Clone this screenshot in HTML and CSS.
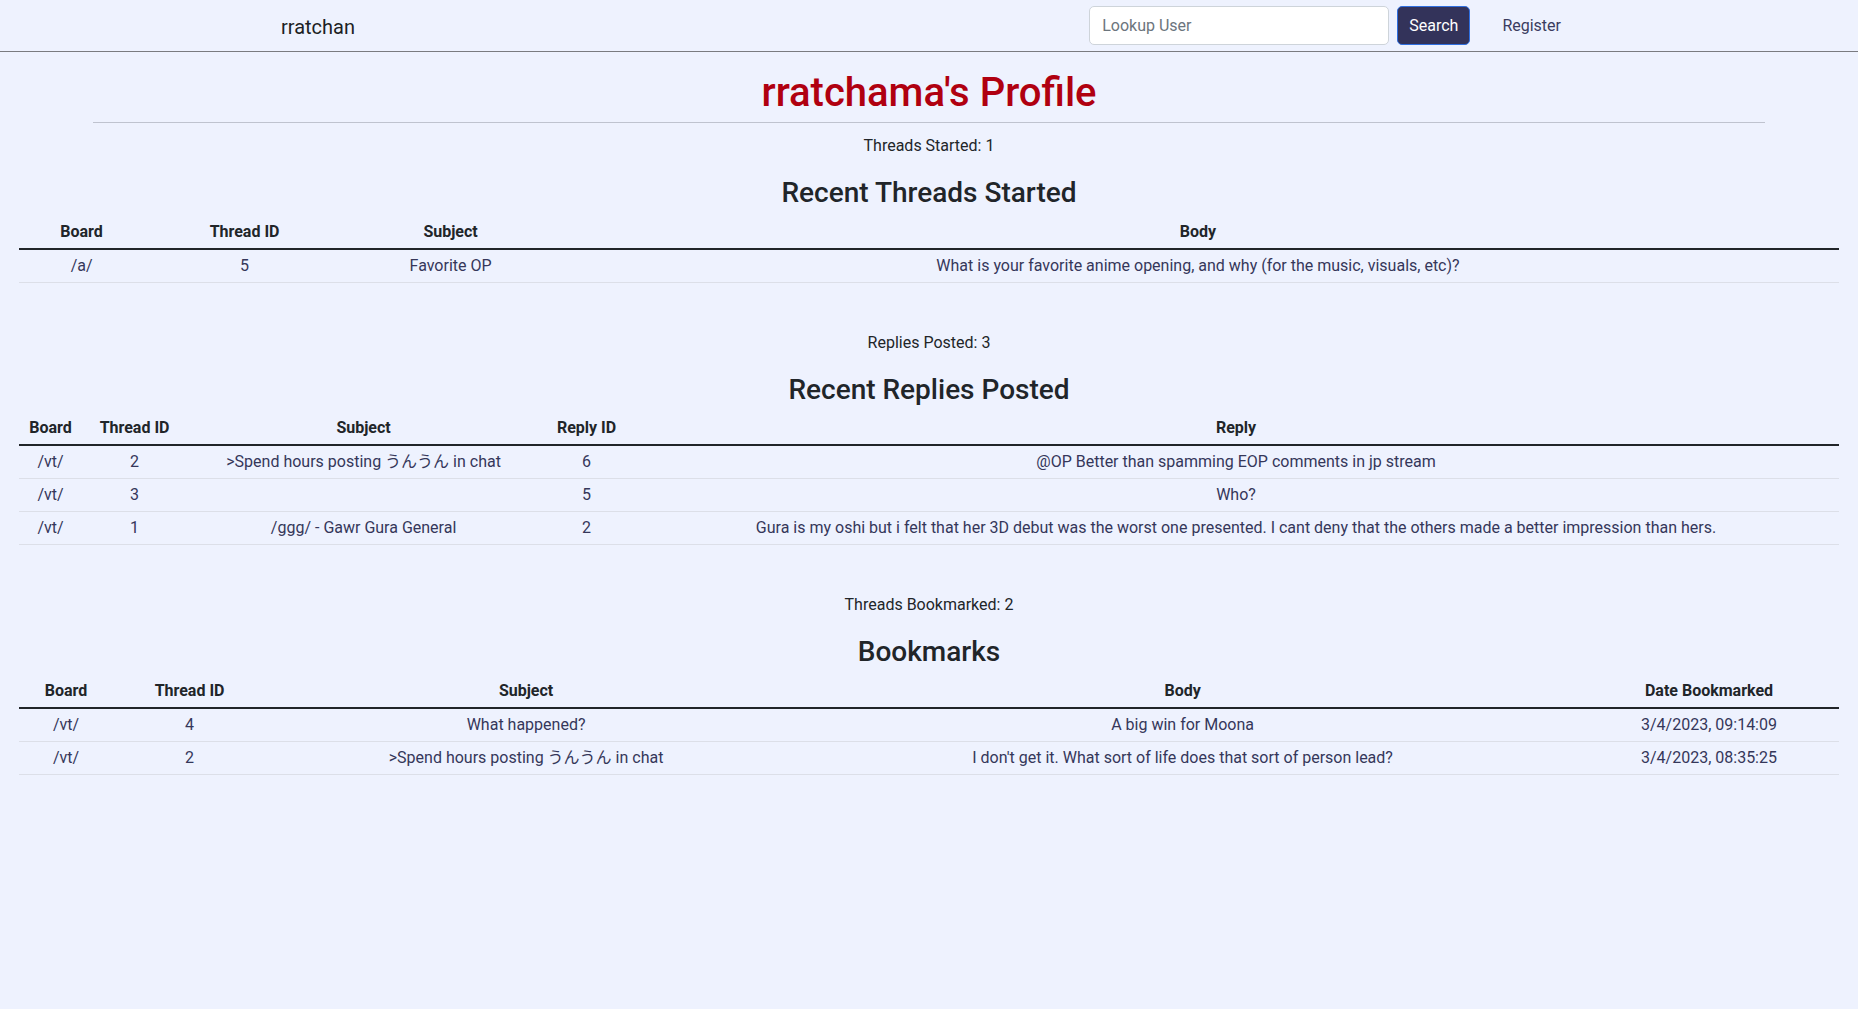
FILE: index.html
```html
<!DOCTYPE html>
<html lang="en">
<head>
<meta charset="utf-8">
<title>rratchama's Profile - rratchan</title>
<link rel="stylesheet" href="styles.css">
</head>
<body>
<nav class="navbar">
  <div class="nav-inner">
    <a class="brand" href="#">rratchan</a>
    <div class="nav-right">
      <form class="search">
        <input class="search-input" type="text" placeholder="Lookup User">
        <button class="search-btn" type="button">Search</button>
      </form>
      <a class="nav-link" href="#">Register</a>
    </div>
  </div>
</nav>

<main class="profile">
  <h1 class="profile-title">rratchama's Profile</h1>
  <hr class="divider">

  <section class="block">
    <p class="count">Threads Started: 1</p>
    <h3 class="block-title">Recent Threads Started</h3>
    <table class="data">
      <thead>
        <tr>
          <th class="c126">Board</th>
          <th class="c200">Thread ID</th>
          <th class="c212">Subject</th>
          <th>Body</th>
        </tr>
      </thead>
      <tbody>
        <tr>
          <td>/a/</td>
          <td>5</td>
          <td>Favorite OP</td>
          <td>What is your favorite anime opening, and why (for the music, visuals, etc)?</td>
        </tr>
      </tbody>
    </table>
  </section>

  <section class="block">
    <p class="count">Replies Posted: 3</p>
    <h3 class="block-title">Recent Replies Posted</h3>
    <table class="data">
      <thead>
        <tr>
          <th class="c64">Board</th>
          <th class="c104">Thread ID</th>
          <th class="c354">Subject</th>
          <th class="c92">Reply ID</th>
          <th>Reply</th>
        </tr>
      </thead>
      <tbody>
        <tr>
          <td>/vt/</td>
          <td>2</td>
          <td>&gt;Spend hours posting うんうん in chat</td>
          <td>6</td>
          <td>@OP Better than spamming EOP comments in jp stream</td>
        </tr>
        <tr>
          <td>/vt/</td>
          <td>3</td>
          <td></td>
          <td>5</td>
          <td>Who?</td>
        </tr>
        <tr>
          <td>/vt/</td>
          <td>1</td>
          <td>/ggg/ - Gawr Gura General</td>
          <td>2</td>
          <td>Gura is my oshi but i felt that her 3D debut was the worst one presented. I cant deny that the others made a better impression than hers.</td>
        </tr>
      </tbody>
    </table>
  </section>

  <section class="block">
    <p class="count">Threads Bookmarked: 2</p>
    <h3 class="block-title">Bookmarks</h3>
    <table class="data">
      <thead>
        <tr>
          <th class="c95">Board</th>
          <th class="c152">Thread ID</th>
          <th class="c521">Subject</th>
          <th class="c792">Body</th>
          <th>Date Bookmarked</th>
        </tr>
      </thead>
      <tbody>
        <tr>
          <td>/vt/</td>
          <td>4</td>
          <td>What happened?</td>
          <td>A big win for Moona</td>
          <td>3/4/2023, 09:14:09</td>
        </tr>
        <tr>
          <td>/vt/</td>
          <td>2</td>
          <td>&gt;Spend hours posting うんうん in chat</td>
          <td>I don't get it. What sort of life does that sort of person lead?</td>
          <td>3/4/2023, 08:35:25</td>
        </tr>
      </tbody>
    </table>
  </section>
</main>
</body>
</html>
```

FILE: styles.css
```css
html, body {
  margin: 0;
  padding: 0;
}

body {
  background: #eef2fe;
  color: #212529;
  font-family: Roboto, "Noto Sans CJK JP", sans-serif;
  font-size: 16px;
  line-height: 24px;
  min-height: 1009px;
}

/* ---------- navbar ---------- */
.navbar {
  border-bottom: 1px solid #7a7b80;
}

.nav-inner {
  box-sizing: border-box;
  max-width: 1320px;
  margin: 0 auto;
  padding: 0 12px;
  height: 51px;
  display: flex;
  align-items: center;
}

.brand {
  font-size: 20px;
  line-height: 30px;
  margin-top: 2px;
  color: #1d1f24;
  text-decoration: none;
}

.nav-right {
  margin-left: auto;
  display: flex;
  align-items: center;
}

.search {
  display: flex;
  align-items: center;
  gap: 8px;
  margin: 0;
}

.search-input {
  box-sizing: border-box;
  width: 300px;
  height: 39px;
  padding: 6px 12px;
  font-family: inherit;
  font-size: 16px;
  color: #212529;
  background: #ffffff;
  border: 1px solid #ced4da;
  border-radius: 5px;
  outline: none;
}

.search-input::placeholder {
  color: #6c757d;
}

.search-btn {
  box-sizing: border-box;
  height: 39px;
  padding: 6px 11px;
  font-family: inherit;
  font-size: 16px;
  color: #ffffff;
  background: #33335a;
  border: 1px solid #2f6fe0;
  border-radius: 5px;
}

.nav-link {
  margin: 0 8px 0 24px;
  padding: 0 8px;
  color: #3a3c5e;
  text-decoration: none;
  font-size: 16px;
}

/* ---------- profile ---------- */
.profile-title {
  margin: 17px 0 5px;
  font-size: 40px;
  line-height: 48px;
  font-weight: 500;
  color: #b00010;
  text-align: center;
}

.divider {
  width: 90%;
  margin: 0 auto;
  border: 0;
  border-top: 1px solid #bfc3cf;
}

.block + .block {
  margin-top: 48px;
}

.count {
  margin: 11px 0 0;
  text-align: center;
  color: #212529;
}

.block + .block .count {
  margin-top: 0;
}

.block-title {
  margin: 18px 0 6px;
  font-size: 28px;
  line-height: 33.6px;
  font-weight: 500;
  text-align: center;
  color: #212529;
}

/* ---------- tables ---------- */
.data {
  width: 98%;
  margin: 0 auto;
  border-collapse: collapse;
  table-layout: fixed;
}

.data th,
.data td {
  padding: 4px;
  text-align: center;
}

.data th {
  font-weight: 700;
  color: #212529;
  border-bottom: 2px solid #212529;
}

.data td {
  color: #35375a;
  border-bottom: 1px solid #dcdfe8;
}

/* column widths (outer width minus 8px cell padding) */
.c64 { width: 56px; }
.c92 { width: 84px; }
.c95 { width: 87px; }
.c104 { width: 96px; }
.c126 { width: 118px; }
.c152 { width: 144px; }
.c200 { width: 192px; }
.c212 { width: 204px; }
.c354 { width: 346px; }
.c521 { width: 513px; }
.c792 { width: 784px; }
```
